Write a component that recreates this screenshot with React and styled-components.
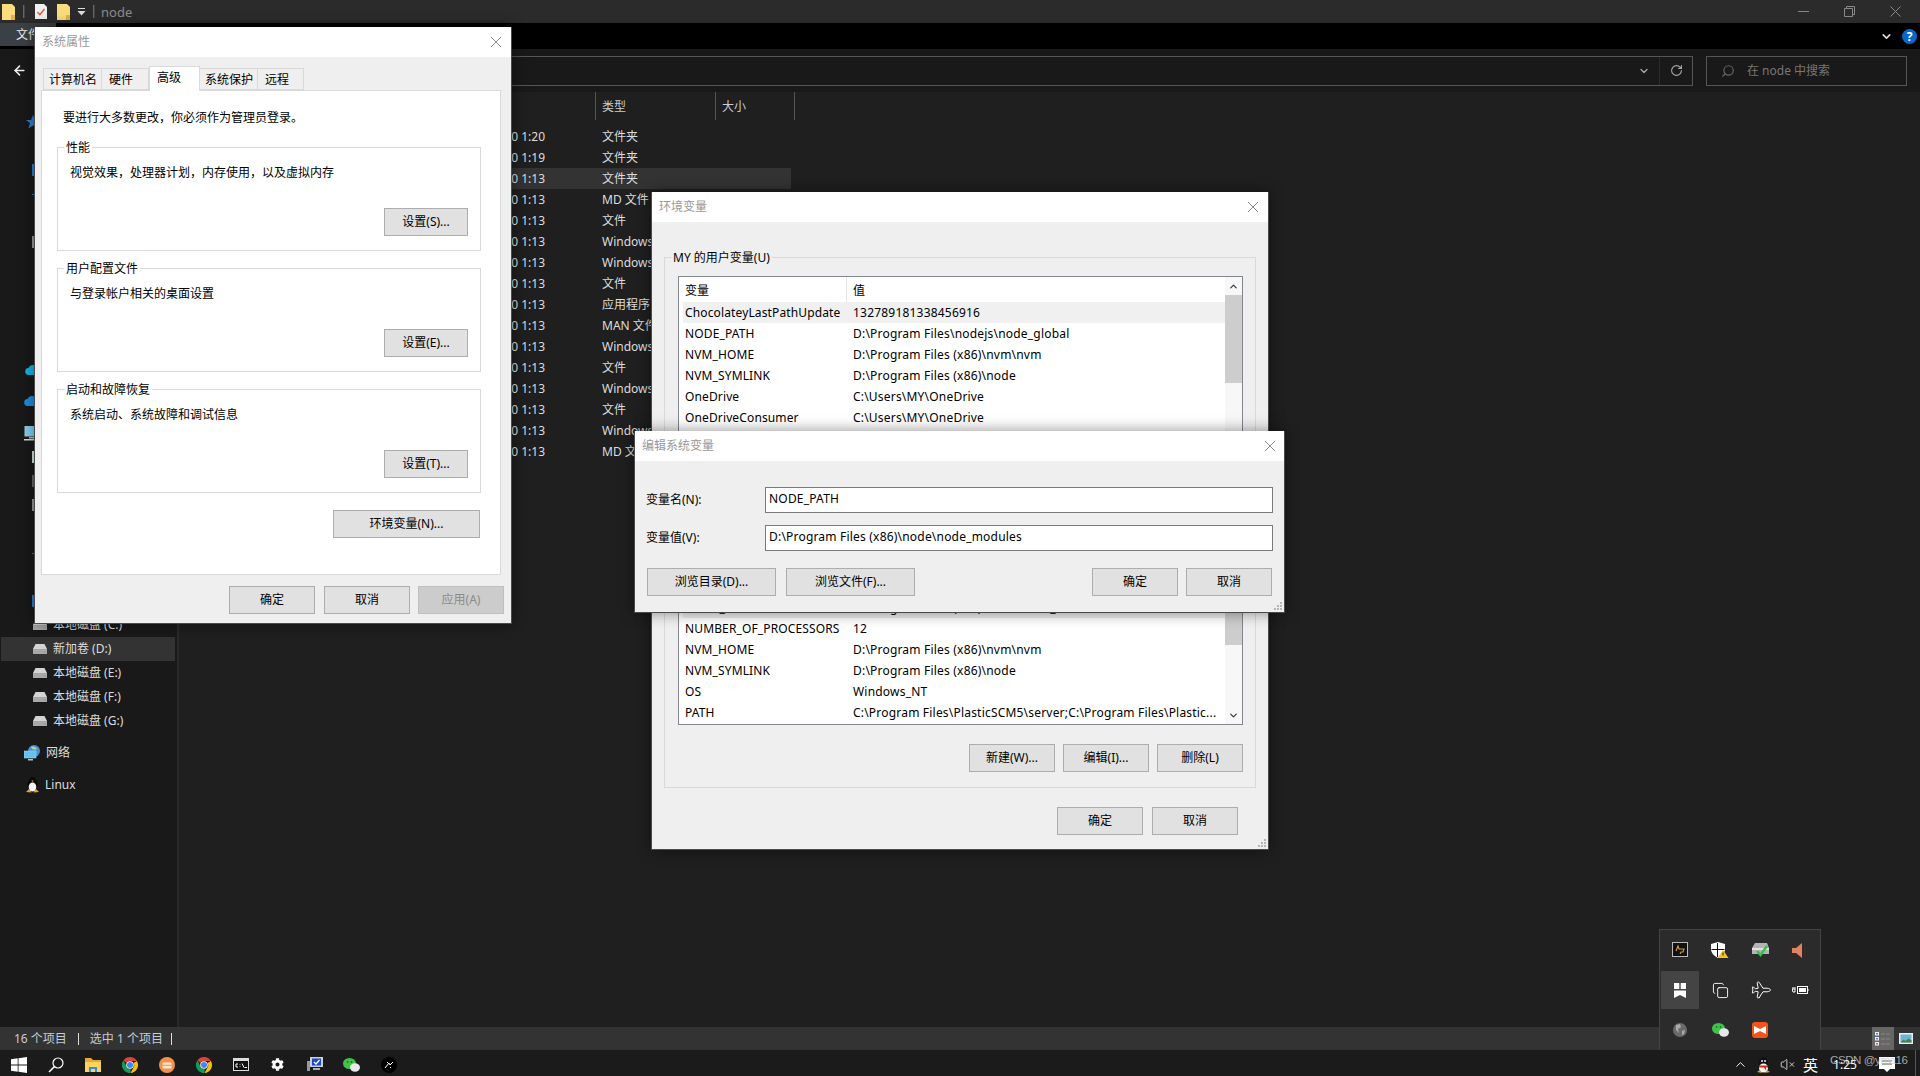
import React from "react";
import styled, { createGlobalStyle } from "styled-components";
import { ChevronDown, ChevronUp, ArrowLeft, RotateCw, Search, VolumeX, Copy, Plane } from "lucide-react";
import { FaCog } from "react-icons/fa";

const FONT = `"Noto Sans", "Noto Sans CJK SC", sans-serif`;

const GlobalStyle = createGlobalStyle`
  html, body { margin: 0; padding: 0; background: #1f1f1f; }
  body { font-family: ${FONT}; font-size: 12px; overflow: hidden; }
  * { box-sizing: border-box; }
`;

const Desktop = styled.div`
  position: relative;
  width: 1920px;
  height: 1076px;
  overflow: hidden;
  display: flex;
  flex-direction: column;
  color: #ddd;
  line-height: 16px;
`;

/* ---------- explorer chrome ---------- */
const TitleBar = styled.div`
  height: 23px;
  background: #2b2b2b;
  display: flex;
  align-items: center;
  padding-left: 2px;
  flex: none;
`;
const TitleSep = styled.div`
  width: 2px;
  height: 13px;
  border-left: 1px solid #666;
  border-right: 1px solid #444;
  margin: 0 ${(p) => p.$right}px 0 ${(p) => p.$left}px;
`;
const TitleIcon = styled.div`
  display: flex;
  margin-left: ${(p) => p.$left}px;
`;
const TitleName = styled.span`
  color: #8c8c8c;
  font-size: 13px;
`;
const WinButtons = styled.div`
  margin-left: auto;
  display: flex;
  align-items: center;
  padding-right: 19px;
  gap: 35px;
`;
const Ribbon = styled.div`
  height: 26px;
  background: #000;
  display: flex;
  flex: none;
  align-items: flex-start;
`;
const FileTab = styled.div`
  width: 56px;
  height: 23px;
  background: #3b4046;
  color: #eee;
  padding: 4px 0 0 16px;
`;
const RibbonRight = styled.div`
  margin-left: auto;
  display: flex;
  align-items: center;
  height: 26px;
  gap: 9px;
  padding-right: 3px;
`;
const HelpDot = styled.div`
  width: 15px;
  height: 15px;
  border-radius: 50%;
  background: #0b66c9;
  color: #fff;
  font-size: 12px;
  font-weight: 700;
  line-height: 15px;
  text-align: center;
`;
const AddressRow = styled.div`
  height: 43px;
  flex: none;
  background: #191919;
  display: flex;
  align-items: center;
  padding: 0 13px 0 12px;
`;
const AddressBox = styled.div`
  flex: 1;
  height: 30px;
  margin-left: 89px;
  border: 1px solid #555;
  display: flex;
  align-items: center;
  justify-content: flex-end;
  color: #aaa;
`;
const RefreshCell = styled.div`
  width: 33px;
  height: 28px;
  margin-left: 9px;
  border-left: 1px solid #2c2c2c;
  display: flex;
  align-items: center;
  justify-content: center;
`;
const SearchBox = styled.div`
  width: 201px;
  height: 30px;
  margin-left: 13px;
  border: 1px solid #555;
  display: flex;
  align-items: center;
  gap: 12px;
  padding-left: 14px;
  color: #777;
`;
const MirroredSearch = styled(Search)`
  transform: scaleX(-1);
`;
const Main = styled.div`
  flex: 1;
  display: flex;
  min-height: 0;
`;
const Sidebar = styled.div`
  width: 179px;
  flex: none;
  background: #191919;
  border-right: 2px solid #2a2a2a;
  padding-top: 18px;
`;
const NavRow = styled.div`
  height: 24px;
  margin-top: ${(p) => p.$top || 0}px;
  display: flex;
  align-items: center;
  gap: 6px;
  padding-left: ${(p) => p.$indent}px;
  margin-left: 1px;
  width: 174px;
  color: #ddd;
  background: ${(p) => (p.$active ? "#333" : "transparent")};
`;
const Content = styled.div`
  flex: 1;
  background: #1f1f1f;
`;
const ColumnHeader = styled.div`
  display: flex;
  height: 28px;
  padding-left: 416px;
  background: #1f1f1f;
`;
const ColumnCell = styled.div`
  width: ${(p) => p.$w}px;
  border-left: 1px solid #555;
  border-right: ${(p) => (p.$last ? "1px solid #555" : "none")};
  padding: 7px 0 0 6px;
  color: #ccc;
`;
const FileList = styled.div`
  padding-top: 6px;
`;
const FileRow = styled.div`
  width: 612px;
  height: 21px;
  display: flex;
  align-items: center;
  background: ${(p) => (p.$active ? "#333" : "transparent")};
`;
const FileDate = styled.div`
  width: 366px;
  text-align: right;
`;
const FileType = styled.div`
  margin-left: 57px;
`;
const StatusBar = styled.div`
  height: 23px;
  flex: none;
  background: #333;
  display: flex;
  align-items: center;
  padding-left: 14px;
  color: #c4ccd6;
`;
const StatusSep = styled.span`
  width: 1px;
  height: 12px;
  background: #ddd;
  margin: 0 ${(p) => p.$gap}px;
`;
const ViewButtons = styled.div`
  margin-left: auto;
  display: flex;
  align-items: center;
  height: 23px;
  gap: 4px;
  padding-right: 6px;
`;
const ViewButton = styled.div`
  width: ${(p) => p.$w}px;
  height: 23px;
  background: ${(p) => (p.$active ? "#666" : "transparent")};
  display: flex;
  align-items: center;
  justify-content: center;
`;
const Taskbar = styled.div`
  height: 26px;
  flex: none;
  background: #1b1b1b;
  display: flex;
  align-items: center;
`;
const TaskSlot = styled.div`
  width: ${(p) => p.$w || 37}px;
  height: 26px;
  padding-top: 3px;
  flex: none;
  display: flex;
  align-items: center;
  justify-content: center;
  color: #fff;
  font-size: ${(p) => p.$size || 12}px;
`;
const TrayStart = styled.div`
  margin-left: auto;
  display: flex;
  align-items: center;
  padding-right: 9px;
  border-right: 1px solid #555;
  margin-right: 4px;
`;
const Watermark = styled.div`
  position: absolute;
  left: 1830px;
  top: 1052px;
  font-family: "Liberation Sans", sans-serif;
  font-size: 11.5px;
  letter-spacing: -0.4px;
  color: rgba(205, 205, 205, 0.8);
  white-space: nowrap;
`;
const TrayPopup = styled.div`
  position: absolute;
  left: 1659px;
  top: 929px;
  width: 162px;
  height: 121px;
  background: #2b2b2b;
  border: 1px solid #444;
  border-bottom: none;
  display: grid;
  grid-template-columns: repeat(4, 40px);
  grid-auto-rows: 40px;
`;
const TrayCell = styled.div`
  display: flex;
  align-items: center;
  justify-content: center;
  background: ${(p) => (p.$active ? "#444" : "transparent")};
  margin: ${(p) => (p.$active ? "1px" : "0")};
  color: #fff;
`;
const TiltedPlane = styled(Plane)`
  transform: rotate(45deg);
`;

/* ---------- classic dialogs ---------- */
const Dialog = styled.div`
  position: absolute;
  background: #efefef;
  color: #000;
  box-shadow: 0 0 14px rgba(0, 0, 0, 0.45);
  border: 1px solid #4a4a4a;
  border-width: 0 1px 1px 1px;
  display: flex;
  flex-direction: column;
`;
const SystemDialog = styled(Dialog)`
  left: 34px;
  top: 27px;
  width: 478px;
  height: 597px;
`;
const EnvDialog = styled(Dialog)`
  left: 651px;
  top: 192px;
  width: 618px;
  height: 658px;
`;
const EditDialog = styled(Dialog)`
  left: 634px;
  top: 431px;
  width: 651px;
  height: 182px;
`;
const DialogTitle = styled.div`
  height: 30px;
  flex: none;
  background: #fff;
  color: #999;
  display: flex;
  align-items: center;
  justify-content: space-between;
  padding: 0 ${(p) => p.$right || 8}px 0 7px;
`;
const TabRow = styled.div`
  display: flex;
  align-items: flex-end;
  height: 24px;
  margin: 9px 0 0 8px;
  position: relative;
  z-index: 1;
`;
const Tab = styled.div`
  width: ${(p) => p.$w}px;
  height: ${(p) => (p.$active ? 25 : 22)}px;
  margin-bottom: ${(p) => (p.$active ? -1 : 0)}px;
  padding: 3px 0 0 ${(p) => p.$pad}px;
  background: ${(p) => (p.$active ? "#fff" : "#efefef")};
  border: 1px solid #d9d9d9;
  border-bottom: ${(p) => (p.$active ? "none" : "1px solid #d9d9d9")};
  border-left-width: ${(p) => (p.$first || p.$active ? 1 : 0)}px;
`;
const TabPanel = styled.div`
  width: 460px;
  height: 485px;
  margin: 0 0 0 6px;
  background: #fff;
  border: 1px solid #d9d9d9;
  padding: 19px 0 0 15px;
`;
const Notice = styled.div`
  padding-left: 6px;
  margin-bottom: 21px;
`;
const GroupBox = styled.div`
  position: relative;
  width: 424px;
  height: 104px;
  margin-bottom: 17px;
  border: 1px solid #d9d9d9;
  padding: 17px 12px 14px 12px;
  display: flex;
  flex-direction: column;
  justify-content: space-between;
`;
const GroupLegend = styled.span`
  position: absolute;
  top: -8px;
  left: 6px;
  padding: 0 2px;
  background: ${(p) => p.$bg || "#fff"};
`;
const Button = styled.button`
  width: ${(p) => p.$w || 86}px;
  height: 28px;
  flex: none;
  padding: 0;
  margin-right: ${(p) => p.$extra || 0}px;
  font: inherit;
  color: ${(p) => (p.disabled ? "#8a8a8a" : "#000")};
  background: ${(p) => (p.disabled ? "#ccc" : "#e1e1e1")};
  border: 1px solid ${(p) => (p.disabled ? "#bfbfbf" : "#adadad")};
  border-radius: 0;
  align-self: flex-end;
`;
const EnvButtonRow = styled.div`
  display: flex;
  justify-content: flex-end;
  padding-right: 20px;
`;
const FooterButtons = styled.div`
  display: flex;
  justify-content: flex-end;
  gap: ${(p) => p.$gap || 8}px;
  padding-right: ${(p) => p.$right}px;
  margin-top: ${(p) => p.$top}px;
`;
const EnvGroup = styled.div`
  position: relative;
  width: 592px;
  height: 257px;
  margin: ${(p) => p.$top}px 0 0 12px;
  border: 1px solid #d9d9d9;
  padding: 18px 12px 0 13px;
`;
const ListView = styled.div`
  width: 565px;
  height: 175px;
  background: #fff;
  border: 1px solid #82878f;
  display: flex;
  overflow: hidden;
`;
const ListBody = styled.div`
  flex: 1;
  min-width: 0;
  padding-left: 4px;
`;
const ListHeader = styled.div`
  height: 25px;
  display: flex;
  align-items: center;
  margin-left: -4px;
  padding-left: 4px;
`;
const ListHeadCell = styled.div`
  width: ${(p) => p.$w}px;
  height: 25px;
  padding: 6px 0 0 2px;
  border-right: 1px solid ${(p) => (p.$line ? "#e5e5e5" : "transparent")};
  margin-right: 4px;
`;
const ListRow = styled.div`
  height: 21px;
  display: flex;
  align-items: center;
  padding-left: 2px;
  white-space: nowrap;
  background: ${(p) => (p.$selected ? "#f0f0f0" : "transparent")};
`;
const VarName = styled.div`
  width: 168px;
  flex: none;
  letter-spacing: 0.13px;
`;
const VarValue = styled.div`
  letter-spacing: 0.2px;
`;
const ScrollTrack = styled.div`
  width: 17px;
  flex: none;
  background: #f7f7f7;
  display: flex;
  flex-direction: column;
  color: #333;
`;
const ScrollArrow = styled.div`
  height: 18px;
  flex: none;
  display: flex;
  align-items: center;
  justify-content: center;
`;
const ScrollThumb = styled.div`
  height: ${(p) => p.$h}px;
  flex: none;
  background: #cdcdcd;
`;
const ScrollSpacer = styled.div`
  flex: 1;
`;
const EnvActions = styled.div`
  display: flex;
  justify-content: flex-end;
  gap: 8px;
  margin-top: 19px;
`;
const FormRow = styled.div`
  display: flex;
  align-items: center;
  height: 26px;
  margin: ${(p) => p.$top}px 11px 0 11px;
`;
const FormLabel = styled.div`
  width: 119px;
  flex: none;
`;
const TextInput = styled.div`
  flex: 1;
  height: 26px;
  background: #fff;
  border: 1px solid #7a7a7a;
  padding: 3px 0 0 3px;
  letter-spacing: 0.2px;
`;
const EditActions = styled.div`
  display: flex;
  gap: 10px;
  margin: 17px 12px 0 12px;
`;
const EditConfirm = styled.div`
  display: flex;
  gap: 8px;
  margin-left: auto;
`;
const Grip = styled.svg`
  position: absolute;
  right: 2px;
  bottom: 2px;
`;

/* ---------- drawings ---------- */
const CloseX = () => (
  <svg width="12" height="12" viewBox="0 0 12 12">
    <path d="M1 1l10 10M11 1L1 11" stroke="#8a8a8a" strokeWidth="1" fill="none" />
  </svg>
);
const ResizeGrip = () => (
  <Grip width="8" height="8" viewBox="0 0 8 8" fill="#b5b5b5">
    <rect x="6" y="0" width="2" height="2" />
    <rect x="3" y="3" width="2" height="2" />
    <rect x="6" y="3" width="2" height="2" />
    <rect x="0" y="6" width="2" height="2" />
    <rect x="3" y="6" width="2" height="2" />
    <rect x="6" y="6" width="2" height="2" />
  </Grip>
);
const YellowFolder = () => (
  <svg width="13" height="16" viewBox="0 0 13 16">
    <path d="M0 0h10l3 3v13H0z" fill="#fbdc7c" />
    <path d="M9 11h4v5H9z" fill="#e2b53e" />
  </svg>
);
const NoteCheck = () => (
  <svg width="12" height="15" viewBox="0 0 12 15">
    <path d="M0 0h9l3 3v12H0z" fill="#f1f1f1" />
    <path d="M2.500 8l2.300 2.600L9.500 5" stroke="#e2552b" strokeWidth="1.400" fill="none" />
  </svg>
);
const QuickArrow = () => (
  <svg width="9" height="8" viewBox="0 0 9 8">
    <path d="M1 .5h7" stroke="#ddd" />
    <path d="M.5 3h8L4.500 7.500z" fill="#ddd" />
  </svg>
);
const Drive = () => (
  <svg width="14" height="10" viewBox="0 0 14 10">
    <path d="M2.500 0h9L14 5H0z" fill="#d3d3d3" />
    <rect y="5" width="14" height="5" fill="#a8a8a8" />
    <rect x="10.500" y="7" width="2" height="1.500" fill="#5ec46b" />
  </svg>
);
const SideIcon = ({ color, h = 12 }) => (
  <svg width="14" height={h} viewBox={`0 0 14 ${h}`}>
    <rect width="14" height={h} fill={color} />
  </svg>
);
const Star = () => (
  <svg width="14" height="14" viewBox="0 0 14 14">
    <path d="M7 0l2 5h5l-4 3 1.600 5.500L7 10.400 2.400 13.500 4 8 0 5h5z" fill="#2b7fd6" />
  </svg>
);
const Cloud = ({ color }) => (
  <svg width="16" height="12" viewBox="0 0 16 12">
    <path d="M4 11a3.500 3.500 0 0 1-.5-7A5 5 0 0 1 13 5a3 3 0 0 1 0 6z" fill={color} />
  </svg>
);
const PcIcon = () => (
  <svg width="16" height="15" viewBox="0 0 16 15">
    <rect x="1" y="0" width="14" height="10" fill="#7fd0f5" stroke="#b8c4cc" />
    <rect x="5" y="11" width="6" height="1.500" fill="#b8c4cc" />
    <rect x="0" y="13" width="16" height="1.500" fill="#d7dde1" />
  </svg>
);
const NetworkIcon = () => (
  <svg width="16" height="16" viewBox="0 0 16 16">
    <circle cx="10" cy="6" r="6" fill="#4f8fd0" />
    <path d="M7 2c2-1 5 0 6 2-2 1-5 1-6-2z" fill="#a8d6a0" />
    <rect x="0" y="6" width="12" height="7" fill="#63c2ef" stroke="#8fd6f5" strokeWidth=".6" />
    <rect x="4" y="14" width="5" height="1.500" fill="#a9c3d2" />
  </svg>
);
const Tux = () => (
  <svg width="13" height="16" viewBox="0 0 13 16">
    <ellipse cx="6.500" cy="8" rx="5" ry="6.500" fill="#050505" />
    <ellipse cx="6.500" cy="3.500" rx="3" ry="3.500" fill="#080808" />
    <ellipse cx="6.500" cy="10" rx="3.800" ry="4.500" fill="#f5f5f5" />
    <path d="M5.300 3.500h2.400L6.500 5z" fill="#e8a91f" />
    <path d="M0 15l3-3 2.500 3.500zM13 15l-3-3-2.500 3.500z" fill="#e8a91f" />
  </svg>
);
const WinLogo = () => (
  <svg width="16" height="16" viewBox="0 0 16 16" fill="#fff">
    <path d="M0 2.300l6.700-1v6.300H0zM7.500 1.200L16 0v7.600H7.500zM0 8.400h6.700v6.300L0 13.700zM7.500 8.400H16V16l-8.500-1.200z" />
  </svg>
);
const SearchGlyph = () => (
  <svg width="16" height="16" viewBox="0 0 16 16" fill="none" stroke="#fff" strokeWidth="1.200">
    <circle cx="10" cy="6" r="5" />
    <path d="M6.400 9.600L1 15" strokeWidth="1.500" />
  </svg>
);
const TaskFolder = () => (
  <svg width="16" height="14" viewBox="0 0 16 14">
    <path d="M0 0h6l2 2h8v12H0z" fill="#e8a93a" />
    <path d="M0 4h16v10H0z" fill="#fbd35e" />
    <path d="M4 14V9h8v5h-2v-3H6v3z" fill="#2f8fe0" />
  </svg>
);
const Chrome = () => (
  <svg width="16" height="16" viewBox="0 0 16 16">
    <path d="M8 0a8 8 0 0 1 6.930 4H8a4 4 0 0 0-3.500 2L1.600 3.200A8 8 0 0 1 8 0z" fill="#db4437" />
    <path d="M14.930 4A8 8 0 0 1 8.500 16l3-5.500A4 4 0 0 0 11.500 6z" fill="#f4c20d" />
    <path d="M1.600 3.200L4.700 10A4 4 0 0 0 8.800 12L8.500 16A8 8 0 0 1 1.600 3.200z" fill="#0f9d58" />
    <circle cx="8" cy="8" r="3.800" fill="#fff" />
    <circle cx="8" cy="8" r="3" fill="#4285f4" />
  </svg>
);
const OrangeCase = () => (
  <svg width="16" height="16" viewBox="0 0 16 16">
    <circle cx="8" cy="8" r="8" fill="#f2924a" />
    <rect x="3.500" y="5.500" width="9" height="6" rx="1" fill="#fbe3cf" />
    <rect x="3.500" y="7.800" width="9" height="1" fill="#f2924a" />
  </svg>
);
const CmdIcon = () => (
  <svg width="16" height="13" viewBox="0 0 16 13">
    <rect x=".5" y=".5" width="15" height="12" fill="#111" stroke="#ddd" />
    <rect x="1" y="1" width="14" height="2" fill="#ddd" />
    <path d="M3 9V6h2M3 9h2M7 6v.6M7 8.400V9M9 5.500L11 9.500M11.500 9.500h2.500" stroke="#fff" fill="none" />
  </svg>
);
const PcCheck = () => (
  <svg width="16" height="15" viewBox="0 0 16 15">
    <rect x="0" y="4" width="3" height="10" fill="#999" />
    <rect x="3" y="0" width="13" height="10" fill="#c9d2dc" />
    <rect x="5" y="1.500" width="9" height="7" fill="#1f47c6" />
    <path d="M7 5l2 2 3.500-4" stroke="#fff" strokeWidth="1.300" fill="none" />
    <rect x="6" y="11" width="7" height="2" fill="#aab" />
  </svg>
);
const WeChat = () => (
  <svg width="17" height="14" viewBox="0 0 17 14">
    <ellipse cx="6.500" cy="5.500" rx="6.500" ry="5.500" fill="#3fc34a" />
    <ellipse cx="12" cy="9.500" rx="5" ry="4.200" fill="#e8e8e8" />
    <circle cx="4.500" cy="4" r=".9" fill="#1c7a26" />
    <circle cx="8.500" cy="4" r=".9" fill="#1c7a26" />
  </svg>
);
const BlackApp = () => (
  <svg width="16" height="16" viewBox="0 0 16 16">
    <circle cx="8" cy="8" r="8" fill="#000" />
    <path d="M4 11l4-5 1 2 3-3M6 5l1 1M9 10l1 1" stroke="#fff" strokeWidth="1" fill="none" />
  </svg>
);
const QQ = () => (
  <svg width="15" height="16" viewBox="0 0 15 16">
    <ellipse cx="7.500" cy="6" rx="4.500" ry="6" fill="#111" />
    <ellipse cx="7.500" cy="11" rx="4.500" ry="4.500" fill="#f5f5f5" />
    <path d="M3 8.500h9v2l-2 0 0 3-2-3H3z" fill="#e02020" />
    <path d="M1 15l3-2 2 3zM14 15l-3-2-2 3z" fill="#e8a91f" />
    <circle cx="6" cy="4" r=".9" fill="#fff" />
    <circle cx="9" cy="4" r=".9" fill="#fff" />
  </svg>
);
const ActionCenter = () => (
  <svg width="16" height="15" viewBox="0 0 16 15">
    <path d="M0 0h16v12h-5l-3 3-3-3H0z" fill="#fff" />
    <path d="M3 4h10M3 7h10" stroke="#555" />
  </svg>
);
const DetailsView = () => (
  <svg width="16" height="14" viewBox="0 0 16 14">
    <rect x="0" y="0" width="4" height="3.500" fill="#eee" />
    <rect x="0" y="5" width="4" height="3.500" fill="#eee" />
    <rect x="0" y="10" width="4" height="3.500" fill="#eee" />
    <rect x="1.200" y="1" width="1.600" height="1.500" fill="#2a6fc9" />
    <rect x="1.200" y="6" width="1.600" height="1.500" fill="#2a6fc9" />
    <rect x="1.200" y="11" width="1.600" height="1.500" fill="#d33" />
    <path d="M6 2h4M11 2h4M6 7h4M11 7h4M6 12h4M11 12h4" stroke="#888" />
  </svg>
);
const PictureView = () => (
  <svg width="14" height="11" viewBox="0 0 14 11">
    <rect width="14" height="11" fill="#eee" />
    <rect x="1.500" y="1.500" width="11" height="8" fill="#6fb3d9" />
    <path d="M1.500 9.500l3-3 2 1.500 3-2.500 3 2v2z" fill="#4d7f4a" />
  </svg>
);
const DarkPicture = () => (
  <svg width="16" height="16" viewBox="0 0 16 16">
    <rect x=".5" y=".5" width="15" height="14" fill="#111" stroke="#bbb" />
    <path d="M4 9l2-5 1 3h5l-1 3H9L8 12" stroke="#c99a3c" strokeWidth="1.200" fill="none" />
  </svg>
);
const ShieldWarn = () => (
  <svg width="18" height="16" viewBox="0 0 18 16">
    <path d="M7 0l7 2v5c0 4-3 7-7 9-4-2-7-5-7-9V2z" fill="#fff" />
    <path d="M6.500 1v14M0.500 7.500h13" stroke="#111" strokeWidth="1" />
    <path d="M12 8l5.500 8h-11z" fill="#f7c41f" />
    <path d="M12 10.500v3" stroke="#222" />
  </svg>
);
const PrinterCheck = () => (
  <svg width="17" height="14" viewBox="0 0 17 14">
    <path d="M3 0h12l2 5v6H0V5z" fill="#b4b4b4" />
    <rect x="0" y="5" width="17" height="2" fill="#e2e2e2" />
    <path d="M5 8l3.500 4L15 3" stroke="#37c24a" strokeWidth="2.400" fill="none" />
  </svg>
);
const OrangeSpeaker = () => (
  <svg width="16" height="15" viewBox="0 0 16 15">
    <path d="M0 5h4l6-5v15l-6-5H0z" fill="#e0835f" />
    <path d="M12 4c1.500 2 1.500 5 0 7" stroke="#4a2a20" strokeWidth="1.200" fill="none" />
  </svg>
);
const TileMark = () => (
  <svg width="12" height="15" viewBox="0 0 12 15" fill="#fff">
    <rect x="0" y="0" width="5.300" height="6" />
    <rect x="6.700" y="0" width="5.300" height="6" />
    <path d="M0 7.500h12V15L6 12 0 15z" />
  </svg>
);
const BatteryPlug = () => (
  <svg width="17" height="10" viewBox="0 0 17 10" fill="none" stroke="#fff">
    <rect x="5.500" y="1.500" width="10" height="7" />
    <rect x="7" y="3" width="7" height="4" fill="#fff" stroke="none" />
    <path d="M16 4v2M0 4h3v3H1zM1 2v2M3 2v2" />
  </svg>
);
const GlobeGray = () => (
  <svg width="14" height="14" viewBox="0 0 14 14">
    <circle cx="7" cy="7" r="7" fill="#6b6b6b" />
    <path d="M3 2l4-1 1 3-3 2 1 4-3-3zM9 8l3-1-1 4-2 1z" fill="#aaa" />
  </svg>
);
const BowTie = () => (
  <svg width="16" height="16" viewBox="0 0 16 16">
    <rect width="16" height="16" rx="3" fill="#f2541b" />
    <path d="M2 4l6 3 6-3v8l-6-3-6 3z" fill="#fff" />
  </svg>
);

/* ---------- data ---------- */
const FILES = [
  ["2021/1/10 1:20", "文件夹"],
  ["2021/1/10 1:19", "文件夹"],
  ["2021/1/10 1:13", "文件夹", true],
  ["2021/1/10 1:13", "MD 文件"],
  ["2021/1/10 1:13", "文件"],
  ["2021/1/10 1:13", "Windows 命令"],
  ["2021/1/10 1:13", "Windows 命令"],
  ["2021/1/10 1:13", "文件"],
  ["2021/1/10 1:13", "应用程序"],
  ["2021/1/10 1:13", "MAN 文件"],
  ["2021/1/10 1:13", "Windows 命令"],
  ["2021/1/10 1:13", "文件"],
  ["2021/1/10 1:13", "Windows 命令"],
  ["2021/1/10 1:13", "文件"],
  ["2021/1/10 1:13", "Windows 命令"],
  ["2021/1/10 1:13", "MD 文件"],
];

const USER_VARS = [
  ["ChocolateyLastPathUpdate", "132789181338456916", true],
  ["NODE_PATH", "D:\\Program Files\\nodejs\\node_global"],
  ["NVM_HOME", "D:\\Program Files (x86)\\nvm\\nvm"],
  ["NVM_SYMLINK", "D:\\Program Files (x86)\\node"],
  ["OneDrive", "C:\\Users\\MY\\OneDrive"],
  ["OneDriveConsumer", "C:\\Users\\MY\\OneDrive"],
  ["Path", "C:\\Users\\MY\\AppData\\Local\\Microsoft\\WindowsApps"],
];

const SYSTEM_VARS = [
  ["NODE_HOME", "D:\\Program Files (x86)\\node"],
  ["NODE_PATH", "D:\\Program Files (x86)\\node\\node_modules", true],
  ["NUMBER_OF_PROCESSORS", "12"],
  ["NVM_HOME", "D:\\Program Files (x86)\\nvm\\nvm"],
  ["NVM_SYMLINK", "D:\\Program Files (x86)\\node"],
  ["OS", "Windows_NT"],
  ["PATH", "C:\\Program Files\\PlasticSCM5\\server;C:\\Program Files\\Plastic..."],
];

const GROUPS = [
  ["性能", "视觉效果，处理器计划，内存使用，以及虚拟内存", "设置(S)..."],
  ["用户配置文件", "与登录帐户相关的桌面设置", "设置(E)..."],
  ["启动和故障恢复", "系统启动、系统故障和调试信息", "设置(T)..."],
];

const VarList = ({ rows, bottom }) => (
  <ListView>
    <ListBody>
      <ListHeader>
        <ListHeadCell $w={164} $line>变量</ListHeadCell>
        <ListHeadCell $w={300}>值</ListHeadCell>
      </ListHeader>
      {rows.map(([name, value, selected]) => (
        <ListRow key={name} $selected={selected}>
          <VarName>{name}</VarName>
          <VarValue>{value}</VarValue>
        </ListRow>
      ))}
    </ListBody>
    <ScrollTrack>
      {bottom ? (
        <>
          <ScrollThumb $h={94} />
          <ScrollSpacer />
          <ScrollArrow><ChevronDown size={11} strokeWidth={2.5} /></ScrollArrow>
        </>
      ) : (
        <>
          <ScrollArrow><ChevronUp size={11} strokeWidth={2.5} /></ScrollArrow>
          <ScrollThumb $h={88} />
        </>
      )}
    </ScrollTrack>
  </ListView>
);

const App = () => (
  <>
    <GlobalStyle />
    <Desktop>
      <TitleBar>
        <YellowFolder />
        <TitleSep $left={8} $right={10} />
        <NoteCheck />
        <TitleIcon $left={10}><YellowFolder /></TitleIcon>
        <TitleIcon $left={7}><QuickArrow /></TitleIcon>
        <TitleSep $left={7} $right={6} />
        <TitleName>node</TitleName>
        <WinButtons>
          <svg width="11" height="11" viewBox="0 0 11 11"><path d="M0 5.500h11" stroke="#888" /></svg>
          <svg width="11" height="11" viewBox="0 0 11 11" fill="none" stroke="#888"><path d="M.5 2.500h8v8h-8zM2.500 2.500v-2h8v8h-2" /></svg>
          <svg width="11" height="11" viewBox="0 0 11 11"><path d="M.5.500l10 10M10.500.500l-10 10" stroke="#888" /></svg>
        </WinButtons>
      </TitleBar>
      <Ribbon>
        <FileTab>文件</FileTab>
        <RibbonRight>
          <ChevronDown size={13} color="#ddd" strokeWidth={3} />
          <HelpDot>?</HelpDot>
        </RibbonRight>
      </Ribbon>
      <AddressRow>
        <ArrowLeft size={15} color="#eee" strokeWidth={2.5} />
        <AddressBox>
          <ChevronDown size={12} color="#aaa" strokeWidth={2.5} />
          <RefreshCell><RotateCw size={13} color="#aaa" strokeWidth={2} /></RefreshCell>
        </AddressBox>
        <SearchBox>
          <MirroredSearch size={14} color="#666" />
          在 node 中搜索
        </SearchBox>
      </AddressRow>
      <Main>
        <Sidebar>
          <NavRow $indent={25}><Star /></NavRow>
          <NavRow $indent={32} />
          <NavRow $indent={31}><SideIcon color="#2b7fd6" /></NavRow>
          <NavRow $indent={31}><SideIcon color="#2b7fd6" h={1} /></NavRow>
          <NavRow $indent={32} />
          <NavRow $indent={31}><SideIcon color="#999" /></NavRow>
          <NavRow $indent={32} />
          <NavRow $indent={32} />
          <NavRow $indent={32} />
          <NavRow $indent={32} />
          <NavRow $indent={24} $top={8}><Cloud color="#13b5ea" /></NavRow>
          <NavRow $indent={23} $top={7}><Cloud color="#1f8ddf" /></NavRow>
          <NavRow $indent={23} $top={8}><PcIcon /></NavRow>
          <NavRow $indent={31}><SideIcon color="#cfe8e8" /></NavRow>
          <NavRow $indent={31}><SideIcon color="#666" /></NavRow>
          <NavRow $indent={31}><SideIcon color="#999" /></NavRow>
          <NavRow $indent={32} />
          <NavRow $indent={31}><SideIcon color="#2b7fd6" h={1} /></NavRow>
          <NavRow $indent={32} />
          <NavRow $indent={31}><SideIcon color="#2b7fd6" /></NavRow>
          {["本地磁盘 (C:)", "新加卷 (D:)", "本地磁盘 (E:)", "本地磁盘 (F:)", "本地磁盘 (G:)"].map((d) => (
            <NavRow key={d} $indent={32} $active={d.startsWith("新")}><Drive />{d}</NavRow>
          ))}
          <NavRow $indent={23} $top={8}><NetworkIcon />网络</NavRow>
          <NavRow $indent={25} $top={8}><Tux />Linux</NavRow>
        </Sidebar>
        <Content>
          <ColumnHeader>
            <ColumnCell $w={120}>类型</ColumnCell>
            <ColumnCell $w={80} $last>大小</ColumnCell>
          </ColumnHeader>
          <FileList>
            {FILES.map(([date, type, active], i) => (
              <FileRow key={i} $active={active}>
                <FileDate>{date}</FileDate>
                <FileType>{type}</FileType>
              </FileRow>
            ))}
          </FileList>
        </Content>
      </Main>
      <StatusBar>
        16 个项目
        <StatusSep $gap={11} />
        选中 1 个项目
        <StatusSep $gap={8} />
        <ViewButtons>
          <ViewButton $active $w={22}><DetailsView /></ViewButton>
          <ViewButton $w={16}><PictureView /></ViewButton>
        </ViewButtons>
      </StatusBar>
      <Taskbar>
        <TaskSlot><WinLogo /></TaskSlot>
        <TaskSlot><SearchGlyph /></TaskSlot>
        <TaskSlot><TaskFolder /></TaskSlot>
        <TaskSlot><Chrome /></TaskSlot>
        <TaskSlot><OrangeCase /></TaskSlot>
        <TaskSlot><Chrome /></TaskSlot>
        <TaskSlot><CmdIcon /></TaskSlot>
        <TaskSlot><FaCog size={13} /></TaskSlot>
        <TaskSlot><PcCheck /></TaskSlot>
        <TaskSlot><WeChat /></TaskSlot>
        <TaskSlot><BlackApp /></TaskSlot>
        <TrayStart>
          <TaskSlot $w={24}><ChevronUp size={15} strokeWidth={1.5} /></TaskSlot>
          <TaskSlot $w={23}><QQ /></TaskSlot>
          <TaskSlot $w={24}><VolumeX size={15} strokeWidth={1.2} /></TaskSlot>
          <TaskSlot $w={23} $size={15}>英</TaskSlot>
          <TaskSlot $w={46}>1:25</TaskSlot>
          <TaskSlot $w={38}><ActionCenter /></TaskSlot>
        </TrayStart>
      </Taskbar>

      <Watermark>CSDN @yma16</Watermark>

      <TrayPopup>
        <TrayCell><DarkPicture /></TrayCell>
        <TrayCell><ShieldWarn /></TrayCell>
        <TrayCell><PrinterCheck /></TrayCell>
        <TrayCell><OrangeSpeaker /></TrayCell>
        <TrayCell $active><TileMark /></TrayCell>
        <TrayCell><Copy size={17} strokeWidth={1.3} /></TrayCell>
        <TrayCell><TiltedPlane size={20} strokeWidth={1.1} /></TrayCell>
        <TrayCell><BatteryPlug /></TrayCell>
        <TrayCell><GlobeGray /></TrayCell>
        <TrayCell><WeChat /></TrayCell>
        <TrayCell><BowTie /></TrayCell>
      </TrayPopup>

      <SystemDialog>
        <DialogTitle $right={9}>系统属性<CloseX /></DialogTitle>
        <TabRow>
          <Tab $w={59} $first $pad={5}>计算机名</Tab>
          <Tab $w={47} $pad={7}>硬件</Tab>
          <Tab $w={51} $active $pad={7}>高级</Tab>
          <Tab $w={58} $pad={5}>系统保护</Tab>
          <Tab $w={46} $pad={7}>远程</Tab>
        </TabRow>
        <TabPanel>
          <Notice>要进行大多数更改，你必须作为管理员登录。</Notice>
          {GROUPS.map(([legend, text, button]) => (
            <GroupBox key={legend}>
              <GroupLegend>{legend}</GroupLegend>
              <span>{text}</span>
              <Button $w={84}>{button}</Button>
            </GroupBox>
          ))}
          <EnvButtonRow><Button $w={147}>环境变量(N)...</Button></EnvButtonRow>
        </TabPanel>
        <FooterButtons $top={11} $right={7}>
          <Button $extra={1}>确定</Button>
          <Button>取消</Button>
          <Button disabled>应用(A)</Button>
        </FooterButtons>
      </SystemDialog>

      <EnvDialog>
        <DialogTitle $right={9}>环境变量<CloseX /></DialogTitle>
        <EnvGroup $top={35}>
          <GroupLegend $bg="#efefef">MY 的用户变量(U)</GroupLegend>
          <VarList rows={USER_VARS} />
          <EnvActions>
            <Button>新建(N)...</Button>
            <Button>编辑(E)...</Button>
            <Button>删除(D)</Button>
          </EnvActions>
        </EnvGroup>
        <EnvGroup $top={17}>
          <GroupLegend $bg="#efefef">系统变量(S)</GroupLegend>
          <VarList rows={SYSTEM_VARS} bottom />
          <EnvActions>
            <Button>新建(W)...</Button>
            <Button>编辑(I)...</Button>
            <Button>删除(L)</Button>
          </EnvActions>
        </EnvGroup>
        <FooterButtons $top={19} $right={30} $gap={9}>
          <Button>确定</Button>
          <Button>取消</Button>
        </FooterButtons>
        <ResizeGrip />
      </EnvDialog>

      <EditDialog>
        <DialogTitle>编辑系统变量<CloseX /></DialogTitle>
        <FormRow $top={26}>
          <FormLabel>变量名(N):</FormLabel>
          <TextInput>NODE_PATH</TextInput>
        </FormRow>
        <FormRow $top={12}>
          <FormLabel>变量值(V):</FormLabel>
          <TextInput>D:\Program Files (x86)\node\node_modules</TextInput>
        </FormRow>
        <EditActions>
          <Button $w={129}>浏览目录(D)...</Button>
          <Button $w={129}>浏览文件(F)...</Button>
          <EditConfirm>
            <Button>确定</Button>
            <Button>取消</Button>
          </EditConfirm>
        </EditActions>
        <ResizeGrip />
      </EditDialog>
    </Desktop>
  </>
);

export default App;
